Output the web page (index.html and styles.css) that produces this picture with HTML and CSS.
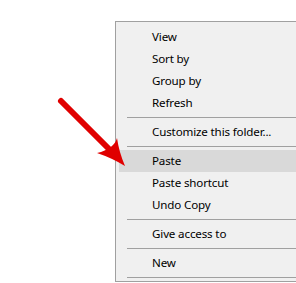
FILE: index.html
```html
<!DOCTYPE html>
<html lang="en">
<head>
    <meta charset="UTF-8">
    <title>Context menu</title>
    <link rel="stylesheet" href="styles.css">
</head>
<body>
<div class="page">
    <ul class="menu">
        <li class="item">View</li>
        <li class="item">Sort by</li>
        <li class="item">Group by</li>
        <li class="item">Refresh</li>
        <li class="sep"></li>
        <li class="item">Customize this folder...</li>
        <li class="sep"></li>
        <li class="item cur">Paste</li>
        <li class="item">Paste shortcut</li>
        <li class="item">Undo Copy</li>
        <li class="sep"></li>
        <li class="item">Give access to</li>
        <li class="sep"></li>
        <li class="item">New</li>
        <li class="sep"></li>
    </ul>
    <svg class="arrow" width="296" height="283" viewBox="0 0 296 283">
        <line x1="61" y1="101" x2="111" y2="151" stroke="#e00000" stroke-width="6" stroke-linecap="round"/>
        <path d="M97 153 Q112 158 125 166 Q119 152 117 138 Q114 149 97 153 Z" fill="#e00000"/>
    </svg>
</div>
</body>
</html>
```
FILE: styles.css
```css
body{margin: 0; background: #fff}
.page{
    width: 296px;
    height: 283px;
    position: relative;
    overflow: hidden;
}
.menu{
    margin: 21px 0 0 115px;
    padding: 4px 0 0 3px;
    width: 220px;
    list-style: none;
    background: #f0f0f0;
    border: 1px solid #a0a0a0;
    font-family: "Noto Sans", "Liberation Sans", sans-serif;
    font-size: 11.6px;
    letter-spacing: -0.15px;
    color: #000;
}
.item{
    height: 22px;
    line-height: 22px;
    padding-left: 33px;
    white-space: nowrap;
}
.item.cur{background: #d9d9d9}
.sep{
    height: 1px;
    margin: 3px 0 3px 8px;
    background: #a0a0a0;
}
.arrow{
    position: absolute;
    top: 0;
    left: 0;
}
```
